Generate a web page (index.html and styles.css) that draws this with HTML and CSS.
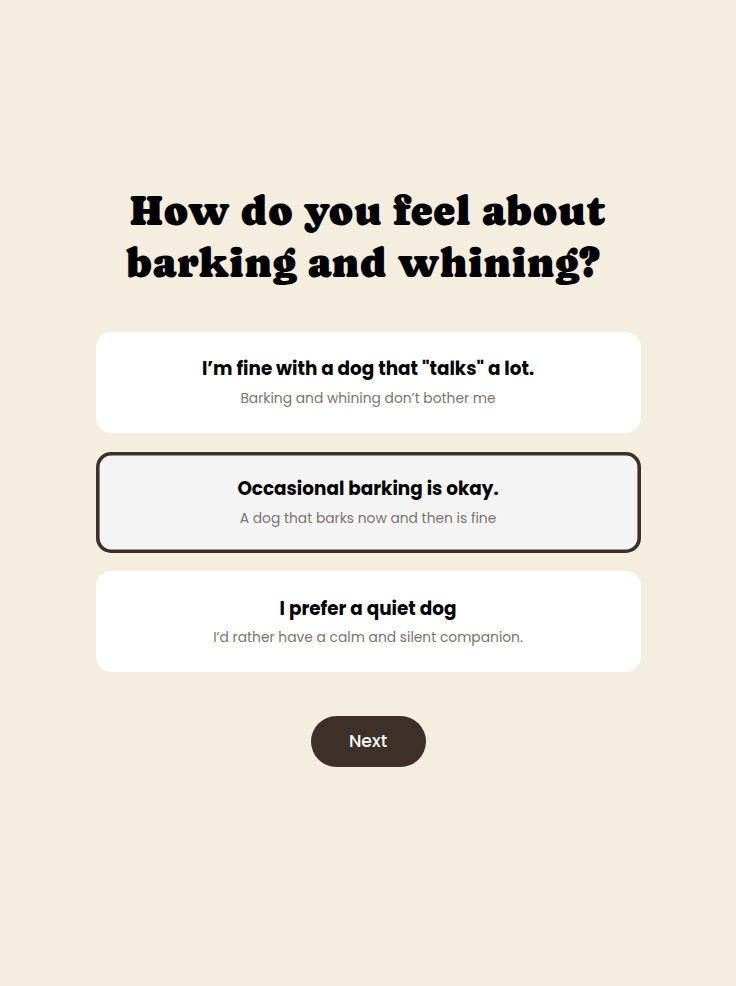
FILE: index.html
```html
<!DOCTYPE html>
<html lang="en">
<head>
<meta charset="utf-8">
<title>Dog match quiz</title>
<link rel="stylesheet" href="styles.css">
</head>
<body>
<main class="quiz">
<h1 class="question"><span class="line">How do you feel about</span><span class="line line-end">barking and whining?</span></h1>
<div class="options">
<button class="option"><span class="title">I’m fine with a dog that "talks" a lot.</span><span class="note">Barking and whining don’t bother me</span></button>
<button class="option selected"><span class="title">Occasional barking is okay.</span><span class="note">A dog that barks now and then is fine</span></button>
<button class="option"><span class="title">I prefer a quiet dog</span><span class="note">I’d rather have a calm and silent companion.</span></button>
</div>
<button class="next">Next</button>
</main>
</body>
</html>
```
FILE: styles.css
```css
* { box-sizing: border-box; }
body { margin: 0; background: #f5ede0; }
button { border: 0; padding: 0; font: inherit; }
.quiz {
  min-height: 986px;
  padding-top: 185px;
  display: flex;
  flex-direction: column;
  align-items: center;
  font-family: Poppins, "Open Sans", sans-serif;
}
.question {
  margin: 0;
  font: 400 41.5px/52px Caprasimo, "DejaVu Serif", serif;
  letter-spacing: 0.42px;
  color: #000;
  text-align: center;
}
.line { display: block; white-space: nowrap; }
.line-end { padding-right: 10px; }
.options { display: grid; gap: 18.6px; margin-top: 43.2px; width: 545px; }
.option {
  height: 101px;
  border-radius: 15px;
  background: #fff;
  display: flex;
  flex-direction: column;
  align-items: center;
}
.selected { background: #f4f4f4; box-shadow: inset 0 0 0 3.6px #3d3029; }
.title { margin-top: 23.2px; font-size: 18.4px; line-height: 28px; font-weight: 700; color: #000; white-space: nowrap; }
.note { margin-top: 3.8px; font-size: 13.82px; line-height: 22px; font-weight: 400; color: #7c746e; white-space: nowrap; }
.next {
  margin-top: 43.2px;
  width: 115px;
  height: 51.4px;
  padding-bottom: 1px;
  border-radius: 26px;
  background: #3d3029;
  color: #fff;
  font-size: 17.3px;
  font-weight: 500;
}
```
